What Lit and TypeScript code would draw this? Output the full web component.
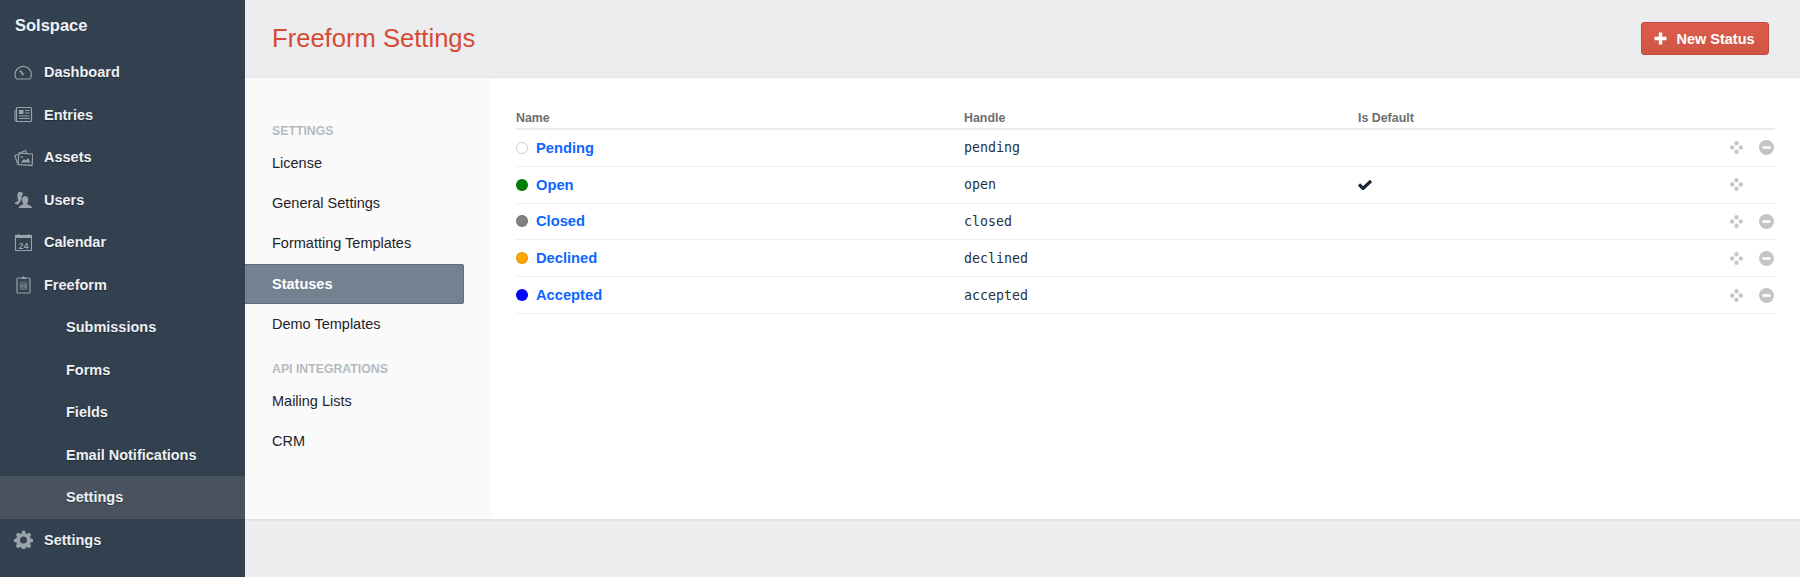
import { LitElement, html, css, svg } from "lit";
import { customElement } from "lit/decorators.js";

const icons: Record<string, unknown> = {
  dash: svg`<path d="M2.500 16C1.500 14.500 1 13 1 11.500a8.200 8.200 0 0 1 16.400 0c0 1.500-.5 3-1.500 4.500z" fill="none" stroke="currentColor" stroke-width="1.200"/><path d="M6 7.500l3.500 4.500" stroke="currentColor" stroke-width="1.800"/>`,
  entries: svg`<rect x="2.500" y="2.500" width="15" height="14" rx="1" fill="none" stroke="currentColor" stroke-width="1.200"/><path d="M2.500 5.500H1v10l1.500 1" fill="none" stroke="currentColor"/><rect x="5" y="5" width="4.500" height="4" fill="currentColor"/><path d="M11 5.500h4.500M11 8h4.500M5 11h10.500M5 13.500h10.500" stroke="currentColor"/>`,
  assets: svg`<path d="M5 5.500L11.500 2.500l1.200 2.500M3.500 15.500L.8 7.500l3.200-1" fill="none" stroke="currentColor" stroke-width="1.100"/><rect x="4.500" y="5.500" width="14" height="11.500" fill="none" stroke="currentColor" stroke-width="1.200" transform="rotate(4 11 11)"/><path d="M6.500 14.500l3.500-3.500 2 1.500 2-2.500 2.500 4.500z" fill="currentColor"/><circle cx="8" cy="9" r="1" fill="currentColor"/>`,
  users: svg`<path d="M.8 14c0-2 3-2.500 3.700-3.500C3.500 8.500 3 6 3.500 4 4 2.500 5 1.800 6.200 1.800S8.500 2.500 9 4c-1 1-1.800 2.800-1.300 5.200L6 12l-2 2.500z" fill="currentColor"/><path d="M4.800 18c0-2.700 3.700-2.800 4.700-4.300-1-1-1.700-3-1.300-5 .3-1.500 1.500-2.700 3-2.700s2.700 1.200 3 2.700c.4 2-.3 4-1.300 5 1 1.500 5.300 1.600 5.300 4.300z" fill="currentColor"/>`,
  cal: svg`<rect x="1.500" y="2.500" width="16" height="15" fill="none" stroke="currentColor" stroke-width="1.100"/><path d="M1.500 2.500h16v2.500h-16z" fill="currentColor"/><path d="M4.500 1v3M14.500 1v3" stroke="currentColor" stroke-width="1.300"/><text x="9.500" y="15.500" font-size="9" text-anchor="middle" fill="currentColor" font-family="Liberation Sans">24</text>`,
  form: svg`<rect x="3" y="3" width="13" height="15" rx="1" fill="none" stroke="currentColor" stroke-width="1.200"/><path d="M7 3.500V2.500h1.500L9.500.8 10.500 2.500H12v1.500z" fill="currentColor"/><rect x="5.500" y="6.500" width="8" height="8.500" fill="currentColor" opacity=".35"/><path d="M6.500 11l1 1 1-2M10.500 10h2M10.500 12h2" stroke="currentColor" fill="none" stroke-width=".8"/>`,
  gear: svg`<path fill-rule="evenodd" d="M8 .8h3l.5 2.400 1.600.7 2.100-1.300 2.100 2.100-1.300 2.100.7 1.600 2.400.5v3l-2.400.5-.7 1.600 1.300 2.100-2.100 2.100-2.100-1.300-1.600.7-.5 2.400H8l-.5-2.400-1.600-.7-2.100 1.300-2.100-2.100 1.300-2.100-.7-1.600-2.400-.5v-3l2.400-.5.7-1.600L2 4.700l2.100-2.100 2.100 1.300 1.600-.7zM9.500 6.500a3.500 3.500 0 1 0 0 7 3.500 3.500 0 0 0 0-7z" fill="currentColor"/>`,
};

const nav = [
  { label: "Dashboard", icon: "dash" },
  { label: "Entries", icon: "entries" },
  { label: "Assets", icon: "assets" },
  { label: "Users", icon: "users" },
  { label: "Calendar", icon: "cal" },
  { label: "Freeform", icon: "form" },
  { label: "Submissions", sub: true },
  { label: "Forms", sub: true },
  { label: "Fields", sub: true },
  { label: "Email Notifications", sub: true },
  { label: "Settings", sub: true, active: true },
  { label: "Settings", icon: "gear" },
];

const statuses = [
  { name: "Pending", handle: "pending", color: "", def: false },
  { name: "Open", handle: "open", color: "#008000", def: true },
  { name: "Closed", handle: "closed", color: "#808080", def: false },
  { name: "Declined", handle: "declined", color: "#ffa500", def: false },
  { name: "Accepted", handle: "accepted", color: "#0000ff", def: false },
];

@customElement("app-root")
export class AppRoot extends LitElement {
  static styles = css`
    :host { display: flex; width: 1800px; height: 577px; overflow: hidden; font-family: "Liberation Sans", Arial, sans-serif; background: #ebedef; }
    .side { width: 245px; flex: none; background: #33404f; color: #fff; }
    .brand { height: 51px; padding-left: 15px; display: flex; align-items: center; font-size: 16.500px; font-weight: 700; color: #f0f2f4; }
    .nav { display: flex; flex-direction: column; }
    .item { height: 42.500px; display: flex; align-items: center; padding-left: 14px; font-size: 14.500px; font-weight: 700; color: #eef0f2; text-shadow: 0 1px 1px rgba(0,0,0,.35); }
    .item svg { width: 19px; height: 19px; margin-right: 11px; color: #9aa2ab; flex: none; }
    .item.sub { padding-left: 66px; }
    .item.active { background: #48535f; }
    .main { flex: 1; display: flex; flex-direction: column; min-width: 0; }
    .head { height: 78px; flex: none; box-sizing: border-box; display: flex; align-items: center; justify-content: space-between; padding: 0 31px 0 27px; border-bottom: 1px solid #e3e5e8; }
    h1 { margin: 0; font-size: 25.600px; font-weight: 400; color: #d84a33; }
    .btn { width: 128px; height: 33px; box-sizing: border-box; background: linear-gradient(#dc5c4c, #cf5545); border: 1px solid #c14a3c; border-radius: 3px; color: #fff; font-size: 14.500px; font-weight: 700; display: flex; align-items: center; justify-content: center; gap: 9px; font-family: inherit; padding: 0 1px 0 0; }
    .btn svg { width: 13px; height: 13px; }
    .body { height: 441px; flex: none; display: flex; background: #fff; border-bottom: 2px solid #e1e4e8; }
    .sub2 { width: 246px; flex: none; background: #fafafa; padding-top: 45px; box-sizing: border-box; }
    .cap { font-size: 12.300px; font-weight: 700; color: #b4bac1; padding-left: 27px; height: 16px; line-height: 16px; }
    .cap.second { margin-top: 17px; }
    .link { height: 40.200px; display: flex; align-items: center; padding-left: 27px; font-size: 14.500px; color: #1d2329; box-sizing: border-box; }
    .link.on { width: 219px; height: 40px; background: #738190; border: 1px solid #5f6e7d; border-left: 0; border-radius: 0 2px 2px 0; color: #fff; font-weight: 700; }
    .links { margin-top: 4px; }
    .tablewrap { flex: 1; padding: 29px 25px 0 25px; min-width: 0; }
    .row { display: grid; grid-template-columns: 448px 394px 1fr 60px; align-items: center; height: 36.800px; box-sizing: border-box; border-bottom: 1px dotted #dcdcdc; }
    .row.th { height: 23px; border-bottom: 2px solid #ebebeb; font-size: 12.400px; font-weight: 700; color: #6e6e6e; }
    .namecell { display: flex; align-items: center; gap: 8px; color: #0d66ff; font-size: 14.700px; font-weight: 700; }
    .dot { width: 12px; height: 12px; border-radius: 50%; box-sizing: border-box; flex: none; border: 1px solid rgba(0,0,0,.1); }
    .dot.empty { border: 1px solid #cfcfcf; background: #fff; }
    .mono { font-family: "DejaVu Sans Mono", monospace; font-size: 13.300px; color: #29323a; }
    .tools { display: flex; align-items: center; justify-content: flex-end; gap: 16px; padding-right: 1px; }
    .tools svg { display: block; }
    .spacer { width: 15px; }
    .check { width: 14px; height: 11px; color: #1d2733; display: block; }
    .foot { flex: 1; }
  `;

  private move() {
    return html`<svg width="13" height="13" viewBox="0 0 13 13" fill="#c6c6c6"><circle cx="6.500" cy="2.200" r="2.200"/><circle cx="2.200" cy="6.500" r="2.200"/><circle cx="10.800" cy="6.500" r="2.200"/><circle cx="6.500" cy="10.800" r="2.200"/></svg>`;
  }

  private minus() {
    return html`<svg width="15" height="15" viewBox="0 0 15 15"><circle cx="7.500" cy="7.500" r="7.500" fill="#c4c4c4"/><rect x="3.500" y="6.200" width="8" height="2.600" fill="#fff"/></svg>`;
  }

  render() {
    return html`
      <aside class="side">
        <div class="brand">Solspace</div>
        <nav class="nav">
          ${nav.map(
            (n) => html`<div class="item ${n.sub ? "sub" : ""} ${n.active ? "active" : ""}">
              ${n.icon ? html`<svg viewBox="0 0 19 19">${icons[n.icon]}</svg>` : ""}${n.label}
            </div>`
          )}
        </nav>
      </aside>
      <div class="main">
        <header class="head">
          <h1>Freeform Settings</h1>
          <button class="btn">
            <svg viewBox="0 0 13 13"><path d="M4.800.5h3.400v4.300h4.300v3.400H8.200v4.300H4.800V8.200H.5V4.800h4.300z" fill="#fff"/></svg>New Status
          </button>
        </header>
        <div class="body">
          <div class="sub2">
            <div class="cap">SETTINGS</div>
            <div class="links">
              ${["License", "General Settings", "Formatting Templates"].map((l) => html`<div class="link">${l}</div>`)}
              <div class="link on">Statuses</div>
              <div class="link">Demo Templates</div>
            </div>
            <div class="cap second">API INTEGRATIONS</div>
            <div class="links">
              ${["Mailing Lists", "CRM"].map((l) => html`<div class="link">${l}</div>`)}
            </div>
          </div>
          <div class="tablewrap">
            <div class="row th"><div>Name</div><div>Handle</div><div>Is Default</div><div></div></div>
            ${statuses.map(
              (s) => html`<div class="row">
                <div class="namecell">
                  <span class="dot ${s.color ? "" : "empty"}" style=${s.color ? `background:${s.color}` : ""}></span>${s.name}
                </div>
                <div class="mono">${s.handle}</div>
                <div>
                  ${s.def
                    ? html`<svg class="check" viewBox="0 0 14 11"><path d="M1 5.500l4 4L13 2" fill="none" stroke="currentColor" stroke-width="3.200"/></svg>`
                    : ""}
                </div>
                <div class="tools">${this.move()}${s.def ? html`<span class="spacer"></span>` : this.minus()}</div>
              </div>`
            )}
          </div>
        </div>
        <div class="foot"></div>
      </div>
    `;
  }
}
